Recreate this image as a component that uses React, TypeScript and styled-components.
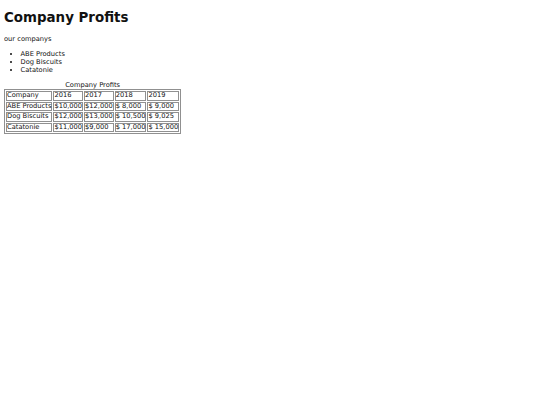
import React from "react";
import styled, { createGlobalStyle } from "styled-components";

const Global = createGlobalStyle`
  body {
    margin: 4px;
    font-family: "DejaVu Sans", Verdana, sans-serif;
    font-size: 6.7px;
    line-height: 8px;
    color: #111;
    background: #fff;
  }
`;

const Title = styled.h1`
  font-size: 13.4px;
  line-height: 16px;
  font-weight: bold;
  margin: 6px 0 9px;
`;

const Para = styled.p`
  margin: 7px 0;
`;

const List = styled.ul`
  margin: 7px 0;
  padding-left: 16.5px;
  list-style: disc;
`;

const Table = styled.table`
  border: 1px solid #909090;
  border-spacing: 1px;
  font-size: 6.7px;
  line-height: 7px;
  margin-top: 7px;
`;

const Caption = styled.caption`
  text-align: center;
  line-height: 8px;
`;

const Cell = styled.td`
  border: 1px solid #909090;
  padding: 0.3px 0;
  white-space: nowrap;
`;

const rows = [
  ["Company", "2016", "2017", "2018", "2019"],
  ["ABE Products", "$10,000", "$12,000", "$ 8,000", "$ 9,000"],
  ["Dog Biscuits", "$12,000", "$13,000", "$ 10,500", "$ 9,025"],
  ["Catatonie", "$11,000", "$9,000", "$ 17,000", "$ 15,000"],
];

export default function App() {
  return (
    <>
      <Global />
      <Title>Company Profits</Title>
      <Para>our companys</Para>
      <List>
        <li>ABE Products</li>
        <li>Dog Biscuits</li>
        <li>Catatonie</li>
      </List>
      <Table>
        <Caption>Company Profits</Caption>
        <tbody>
          {rows.map((r, i) => (
            <tr key={i}>
              {r.map((c, j) => (
                <Cell key={j}>{c}</Cell>
              ))}
            </tr>
          ))}
        </tbody>
      </Table>
    </>
  );
}
